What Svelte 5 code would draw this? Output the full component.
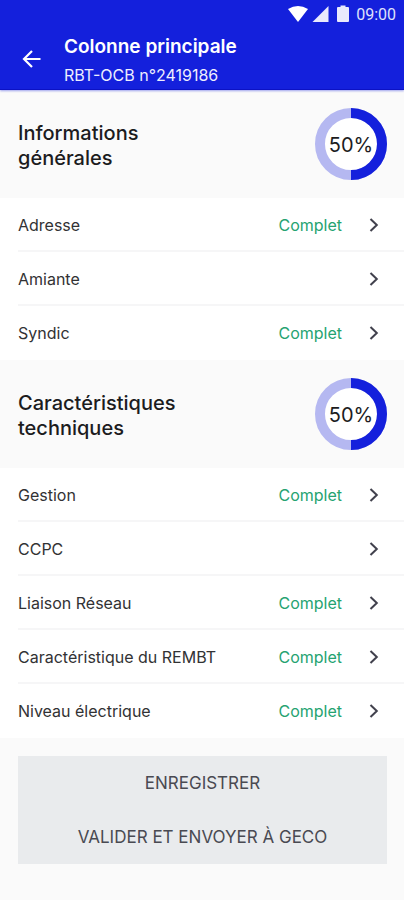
<script>
  const sections = [
    {
      title: 'Informations générales',
      progress: 50,
      items: [
        { label: 'Adresse', complete: true },
        { label: 'Amiante', complete: false },
        { label: 'Syndic', complete: true }
      ]
    },
    {
      title: 'Caractéristiques techniques',
      progress: 50,
      items: [
        { label: 'Gestion', complete: true },
        { label: 'CCPC', complete: false },
        { label: 'Liaison Réseau', complete: true },
        { label: 'Caractéristique du REMBT', complete: true },
        { label: 'Niveau électrique', complete: true }
      ]
    }
  ];
</script>

<div class="screen">
  <header>
    <div class="status">
      <svg width="20" height="18" viewBox="0 0 20 18" aria-hidden="true">
        <path d="M0 4 Q10 -2 20 4 L10 17 Z" fill="#fff" />
      </svg>
      <svg width="17" height="18" viewBox="0 0 17 18" aria-hidden="true">
        <path d="M16.500 1 V17 H0.500 Z" fill="#e9e9fc" />
      </svg>
      <svg class="battery" width="12" height="18" viewBox="0 0 12 18" aria-hidden="true">
        <path d="M3.500 0.500 H8.500 V2 H11 Q12 2 12 3 V16 Q12 17 11 17 H1 Q0 17 0 16 V3 Q0 2 1 2 H3.500 Z" fill="#e9e9fc" />
      </svg>
      <span>09:00</span>
    </div>
    <div class="bar">
      <button class="back" aria-label="Retour">
        <svg width="20" height="20" viewBox="0 0 20 20" aria-hidden="true">
          <path d="M18.500 10 H2.500 M10 2 L2 10 L10 18" fill="none" stroke="#fff" stroke-width="2.200" />
        </svg>
      </button>
      <div>
        <h1>Colonne principale</h1>
        <p>RBT-OCB n°2419186</p>
      </div>
    </div>
  </header>

  <main>
    {#each sections as section}
      <section>
        <div class="heading">
          <h2>{section.title}</h2>
          <div class="ring">
            <svg width="72" height="72" viewBox="0 0 72 72" aria-hidden="true">
              <circle cx="36" cy="36" r="31" fill="#fff" stroke="#b5b8f1" stroke-width="10" />
              <circle
                cx="36" cy="36" r="31" fill="none" stroke="#1420dc" stroke-width="10"
                pathLength="100" stroke-dasharray="{section.progress} 100" transform="rotate(-90 36 36)"
              />
            </svg>
            <span>{section.progress}%</span>
          </div>
        </div>
        <ul>
          {#each section.items as item}
            <li>
              <a href="#detail">
                <span class="label">{item.label}</span>
                {#if item.complete}<span class="state">Complet</span>{/if}
                <svg width="10" height="14" viewBox="0 0 10 14" aria-hidden="true">
                  <path d="M1.500 1 L7.800 7 L1.500 13" fill="none" stroke="#41414d" stroke-width="2" />
                </svg>
              </a>
            </li>
          {/each}
        </ul>
      </section>
    {/each}
  </main>

  <footer>
    <button>ENREGISTRER</button>
    <button>VALIDER ET ENVOYER À GECO</button>
  </footer>
</div>

<style>
  :global(body) {
    margin: 0;
    background: #fafafa;
  }
  .screen {
    min-height: 100vh;
    background: #fafafa;
    color: #323234;
    font-family: Inter, "Liberation Sans", sans-serif;
    font-size: 16px;
  }
  h1, h2, p, ul {
    margin: 0;
    padding: 0;
  }
  button {
    border: 0;
    padding: 0;
    font: inherit;
    cursor: pointer;
  }
  header {
    box-sizing: border-box;
    height: 90px;
    background: #1420dc;
    border-bottom: 1px solid #0c12c4;
    box-shadow: 0 1px 2px #1420dc66;
    color: #fff;
    position: relative;
  }
  .status {
    display: flex;
    align-items: center;
    justify-content: flex-end;
    height: 28px;
    padding: 0 8px 0 0;
    gap: 4px;
    color: #dfe0fb;
    font-family: Roboto, sans-serif;
    font-size: 16px;
  }
  .battery {
    margin: 0 3px 0 4px;
  }
  .bar {
    display: flex;
    align-items: flex-start;
    gap: 20px;
    padding: 5px 22px 0;
  }
  .back {
    display: flex;
    align-items: center;
    width: 22px;
    height: 52px;
    background: none;
  }
  h1 {
    font-size: 19px;
    line-height: 28px;
    font-weight: 600;
  }
  p {
    font-size: 16px;
    line-height: 28px;
    color: #eeeefe;
  }
  .heading {
    display: flex;
    align-items: center;
    justify-content: space-between;
    height: 108px;
    padding: 0 17px 0 18px;
  }
  h2 {
    width: 180px;
    padding-top: 3px;
    font-size: 20px;
    line-height: 25px;
    font-weight: 500;
    color: #1c1c1e;
  }
  .ring {
    display: grid;
    place-items: center;
  }
  .ring > * {
    grid-area: 1 / 1;
  }
  .ring span {
    padding-top: 2px;
    font-size: 20px;
    color: #1c1c1e;
    z-index: 1;
  }
  ul {
    list-style: none;
    background: #fff;
  }
  li {
    padding-left: 18px;
  }
  a {
    box-sizing: border-box;
    display: flex;
    align-items: center;
    height: 54px;
    padding: 2px 25px 0 0;
    border-bottom: 2px solid #f6f6f7;
    color: inherit;
    text-decoration: none;
  }
  li:last-child a {
    border-bottom-color: transparent;
  }
  .label {
    flex: 1;
  }
  .state {
    color: #25a371;
    margin-right: 27px;
  }
  footer {
    display: flex;
    flex-direction: column;
    padding: 18px 17px 18px 18px;
  }
  footer button {
    height: 54px;
    background: #e9ebed;
    color: #494a52;
    font-size: 17px;
  }
</style>
